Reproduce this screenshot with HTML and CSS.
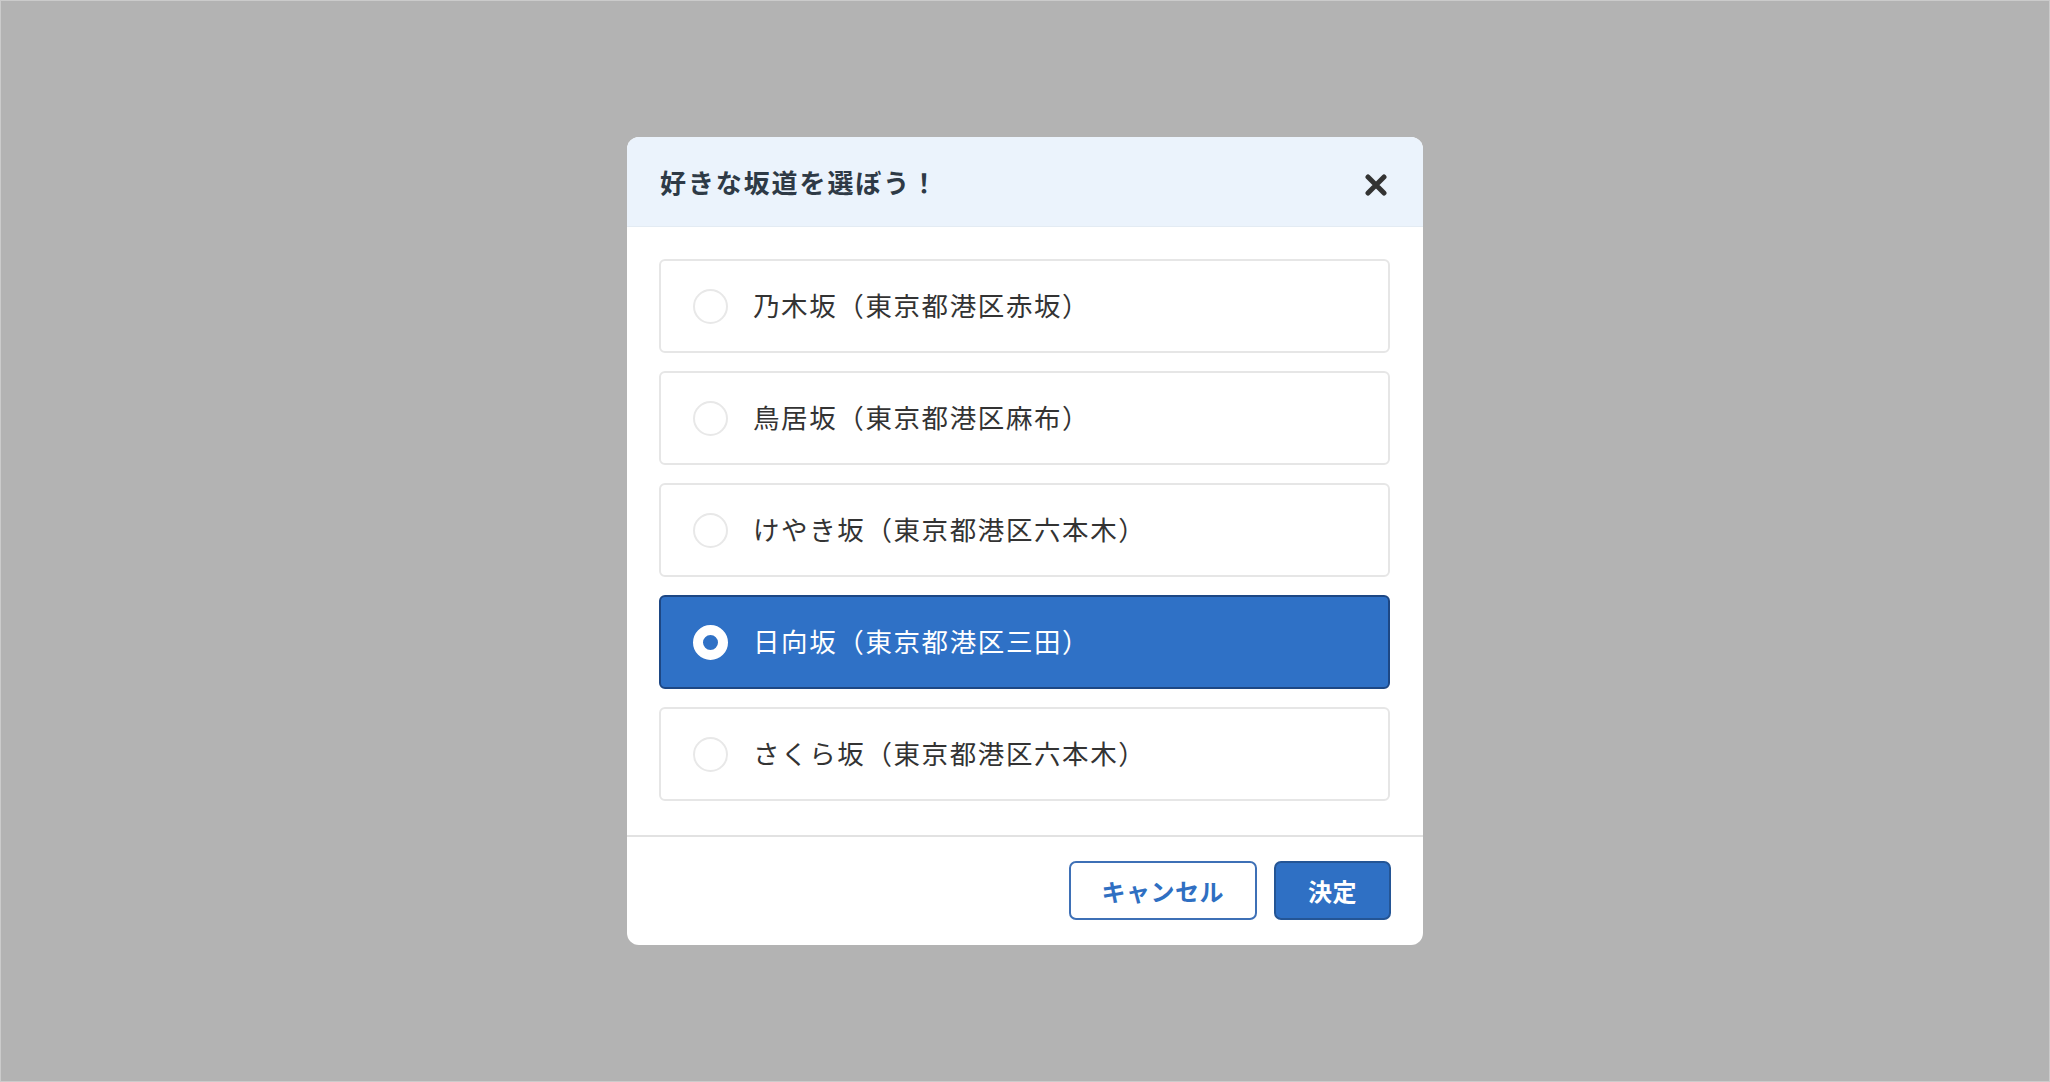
FILE: index.html
```html
<!doctype html>
<html lang="ja">
<head>
<meta charset="utf-8">
<title>坂道を選ぼう</title>
<link rel="stylesheet" href="styles.css">
</head>
<body>
<div class="overlay">
	<div class="modal">
		<div class="modal-head">
			<h2 class="title">好きな坂道を選ぼう！</h2>
			<span class="close">
				<svg width="22" height="22" viewBox="0 0 22 22"><path d="M3 3 L19 19 M19 3 L3 19" stroke="#333" stroke-width="5" stroke-linecap="round"/></svg>
			</span>
		</div>

		<div class="modal-body">
			<label class="option"><span class="radio"></span><span class="label">乃木坂（東京都港区赤坂）</span></label>
			<label class="option"><span class="radio"></span><span class="label">鳥居坂（東京都港区麻布）</span></label>
			<label class="option"><span class="radio"></span><span class="label">けやき坂（東京都港区六本木）</span></label>
			<label class="option selected"><span class="radio"></span><span class="label">日向坂（東京都港区三田）</span></label>
			<label class="option"><span class="radio"></span><span class="label">さくら坂（東京都港区六本木）</span></label>
		</div>

		<div class="modal-foot">
			<span class="btn cancel">キャンセル</span>
			<span class="btn ok">決定</span>
		</div>
	</div>
</div>
</body>
</html>
```

FILE: styles.css
```css
* {
	margin: 0;
	padding: 0;
	box-sizing: border-box;
}

html, body {
	height: 100%;
}

body {
	background: #b3b3b3;
	font-family: "Noto Sans CJK JP", "Noto Sans", sans-serif;
	color: #333;
}

.overlay {
	height: 100%;
	border: 1px solid #cbcbcb;
	display: flex;
	align-items: center;
	justify-content: center;
}

.modal {
	width: 796px;
	background: #fff;
	border-radius: 12px;
	overflow: hidden;
}

.modal-head {
	height: 90px;
	padding: 0 36px 0 33px;
	background: #ebf3fc;
	border-bottom: 1px solid #e3ebf3;
	display: flex;
	align-items: center;
	justify-content: space-between;
}

.title {
	font-size: 26px;
	font-weight: bold;
	color: #2e3a46;
	letter-spacing: 1.9px;
}

.close {
	display: flex;
	margin-top: 6px;
}

.modal-body {
	padding: 32px 33px 34px 32px;
	display: flex;
	flex-direction: column;
	gap: 18px;
}

.option {
	height: 94px;
	border: 2px solid #e6e6e6;
	border-radius: 6px;
	display: flex;
	align-items: center;
	padding-left: 32px;
	gap: 25px;
}

.radio {
	width: 35px;
	height: 35px;
	border-radius: 50%;
	border: 2px solid #e8e8e8;
	background: #fff;
}

.label {
	font-size: 26.5px;
	color: #333;
	letter-spacing: 1.6px;
	margin-top: -3px;
}

.option.selected {
	background: #2f71c6;
	border-color: #1d4784;
}

.option.selected .radio {
	border: 10px solid #fff;
	background: #2f71c6;
}

.option.selected .label {
	color: #fff;
}

.modal-foot {
	border-top: 2px solid #e2e2e2;
	padding: 24px 32px 25px;
	display: flex;
	justify-content: flex-end;
	gap: 17px;
}

.btn {
	height: 59px;
	padding: 0 32px;
	border-radius: 7px;
	border: 2px solid #3e70b6;
	font-size: 24px;
	font-weight: bold;
	display: flex;
	align-items: center;
	letter-spacing: 0.5px;
}

.btn.cancel {
	background: #fff;
	color: #2f6fc2;
	padding: 0 31px;
}

.btn.ok {
	background: #2f70c4;
	border-color: #245595;
	color: #fff;
}
```
